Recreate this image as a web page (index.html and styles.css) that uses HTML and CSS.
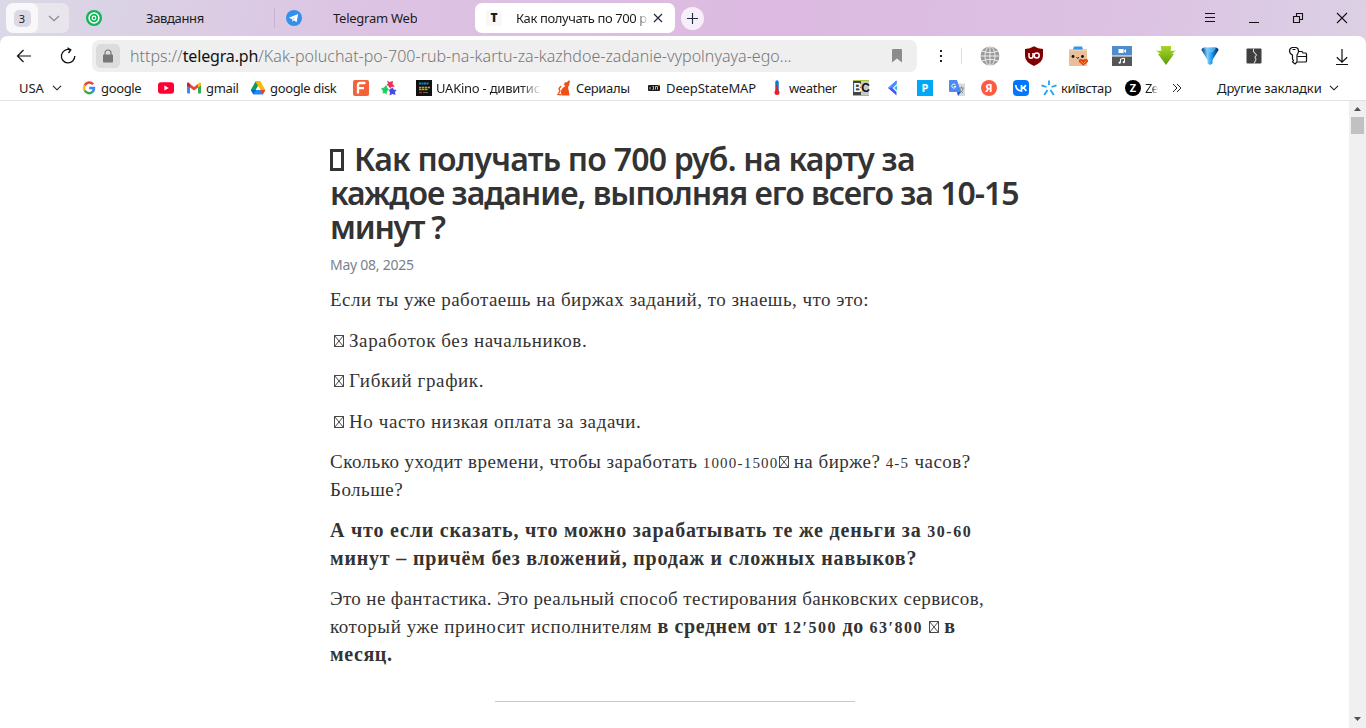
FILE: index.html
```html
<!DOCTYPE html>
<html lang="ru">
<head>
    <meta charset="utf-8">
    <title>Как получать по 700 руб.</title>
    <link rel="stylesheet" href="styles.css">
</head>
<body>
    <svg class="defs">
        <symbol id="tofu" viewBox="0 0 10 12"><path d="M.5.5h9v11h-9zM.5.5l9 11M9.5.5l-9 11" fill="none" stroke="#333" stroke-width=".9"/></symbol>
        <symbol id="down" viewBox="0 0 10 6"><path d="M1 .8l4 4 4-4" fill="none" stroke="currentColor" stroke-width="1.1"/></symbol>
    </svg>
    <div class="tabs">
        <div class="group">
            <div class="group_count"><span>3</span></div>
            <svg class="group_arrow" width="12" height="7" viewBox="0 0 12 7"><path d="M1 1l5 4.6L11 1" fill="none" stroke="#8d8791" stroke-width="1.2"/></svg>
        </div>
        <div class="tab first">
            <svg width="16" height="16" viewBox="0 0 16 16"><circle cx="8" cy="8" r="8" fill="#13b455"/><circle cx="8" cy="8" r="4.9" fill="none" stroke="#fff" stroke-width="1.5"/><circle cx="8" cy="8" r="1.8" fill="none" stroke="#fff" stroke-width="1.2"/></svg>
            <span class="t1">Завдання</span>
        </div>
        <div class="tab second">
            <svg width="16" height="16" viewBox="0 0 16 16"><circle cx="8" cy="8" r="8" fill="#3390ec"/><path d="M2.8 7.8L12.2 4l-1.6 8.2-2.7-2-1.5 1.5-.3-2.5z" fill="#fff"/><path d="M6.1 9.2l4-3.3-3 3.7-.7 2z" fill="#9fcbf6"/></svg>
            <span class="t2">Telegram Web</span>
        </div>
        <div class="tab active">
            <div class="t_icon">T</div>
            <span class="t3">Как получать по 700 р</span>
            <svg width="10" height="10" viewBox="0 0 10 10"><path d="M1 1l8 8M9 1L1 9" stroke="#222b3c" stroke-width="1.2"/></svg>
        </div>
        <div class="plus"><svg width="11" height="11" viewBox="0 0 11 11"><path d="M5.5 0v11M0 5.5h11" stroke="#222b3c" stroke-width="1.1"/></svg></div>
        <div class="window">
            <svg width="12" height="12" viewBox="0 0 12 12"><path d="M1 1.5h10M1 5.5h10M1 9.5h10" stroke="#111"/></svg>
            <svg width="12" height="12" viewBox="0 0 12 12"><path d="M1 10.5h10" stroke="#111"/></svg>
            <svg width="12" height="12" viewBox="0 0 12 12"><path d="M1.5 4.5h6v6h-6zM4.5 4.5v-3h6v6h-3" fill="none" stroke="#111" stroke-width="1.1"/></svg>
            <svg width="12" height="12" viewBox="0 0 12 12"><path d="M1 1l10 10M11 1L1 11" stroke="#111" stroke-width="1.1"/></svg>
        </div>
    </div>

    <div class="chrome">
        <div class="toolbar">
            <svg class="back" width="16" height="14" viewBox="0 0 16 14"><path d="M15 7H1.6M7.5 1l-6 6 6 6" fill="none" stroke="#111" stroke-width="1.2"/></svg>
            <svg class="reload" width="18" height="18" viewBox="0 0 18 18"><path d="M15.8 9a6.7 6.7 0 1 1-4.7-6.2M8.5.7l3.3 2.2L9.5 6" fill="none" stroke="#111" stroke-width="1.3"/></svg>
            <div class="url">
                <div class="lock"><svg width="12" height="14" viewBox="0 0 12 14"><rect x="1" y="5.5" width="10" height="8" rx="1" fill="#777"/><path d="M3 6V4a3 3 0 0 1 6 0v2" fill="none" stroke="#777" stroke-width="1.2"/></svg></div>
                <div class="address">https://<b>telegra.ph</b>/Kak-poluchat-po-700-rub-na-kartu-za-kazhdoe-zadanie-vypolnyaya-ego...</div>
                <svg width="10" height="14" viewBox="0 0 10 14"><path d="M0 1q0-1 1-1h8q1 0 1 1v12.5l-5-4-5 4z" fill="#8c8c8c"/></svg>
            </div>
            <div class="dots"><i></i><i></i><i></i></div>
            <div class="line"></div>
            <div class="extensions">
                <svg width="20" height="20" viewBox="0 0 20 20"><circle cx="10" cy="10" r="9.5" fill="#999"/><path d="M10 0v20M0 10h20M2 5q8 3.2 16 0M2 15q8-3.2 16 0" fill="none" stroke="#eee"/><ellipse cx="10" cy="10" rx="5" ry="9.5" fill="none" stroke="#eee"/></svg>
                <svg width="20" height="20" viewBox="0 0 20 20"><path d="M10 .3q4 2.5 9 2.6v7q0 6-9 10-9-4-9-10v-7q5 0 9-2.6z" fill="#800000"/><path d="M5 7v3q0 2.2 2 2.2t2-2.2V7" fill="none" stroke="#fff" stroke-width="1.5"/><circle cx="12.7" cy="9.6" r="2.5" fill="none" stroke="#fff" stroke-width="1.5"/></svg>
                <svg width="20" height="20" viewBox="0 0 20 20"><rect x="1" y="3" width="18" height="17" rx="1" fill="#e9bf99"/><path d="M1 3h18v2H1z" fill="#f1cfaf"/><path d="M5 3.5L6 .5h8l1 3z" fill="#2898f2"/><circle cx="5" cy="10.5" r="1.4" fill="#111"/><circle cx="14.5" cy="10.5" r="1.4" fill="#111"/><path d="M8.5 11.5q1.2 1.5 2.5 0" fill="none" stroke="#111"/><path d="M15.3 19.5L11 16q-1-3 2-3 1.5 0 2.3 1 1-1 2.5-1 3 0 2 3z" fill="#e8391f"/><path d="M12.5 15l3 2.5 3-3" fill="none" stroke="#fa2"/></svg>
                <svg width="20" height="20" viewBox="0 0 20 20"><path d="M0 0h20v9.5H0z" fill="#4f8ccc"/><path d="M0 10.5h20V20H0z" fill="#565656"/><path d="M6.500 3h5v4h-5zM11.500 5l2.500-2v4z" fill="#fff"/><path d="M8.500 16.500V13l4-.8V16" fill="none" stroke="#fff"/><circle cx="7.7" cy="16.7" r="1.1" fill="#fff"/><circle cx="11.8" cy="16.2" r="1.1" fill="#fff"/></svg>
                <svg width="20" height="20" viewBox="0 0 20 20"><defs><linearGradient id="green" x2="0" y2="1"><stop stop-color="#a9d52a"/><stop offset="1" stop-color="#5b9d0c"/></linearGradient></defs><path d="M2 0h3v4.500H0L3.500 8H2l8 11 8-11h-1.500L20 4.500h-5V0h3z" fill="url(#green)"/><path d="M3 0l2.500 4.500H.5L4.500 8M17 0l-2.500 4.500h5L15.500 8" fill="none" stroke="#eef8d3" stroke-width=".7"/></svg>
                <svg width="20" height="20" viewBox="0 0 20 20"><defs><linearGradient id="blue"><stop stop-color="#04337c"/><stop offset=".35" stop-color="#7cd0fb"/><stop offset=".6" stop-color="#1d9cf2"/><stop offset="1" stop-color="#02235c"/></linearGradient></defs><path d="M1.5 4q0-2 3-2.5h11q3 .5 3 2.500l-6 10v3.500L10 19l-2.500-1.500V14z" fill="url(#blue)"/><path d="M4 2h12l-3 4-3 1-3-1z" fill="#7cc9f8" opacity=".6"/></svg>
                <svg width="20" height="20" viewBox="0 0 20 20"><rect x="2.5" y="2.500" width="15" height="15" rx="1" fill="#3f3f3f"/><path d="M9.500 2.500v3l3 3.500-1.500 2 1 2.500-2 4" fill="none" stroke="#d2d2d2" stroke-width="1.1"/></svg>
                <svg width="20" height="20" viewBox="0 0 20 20"><path d="M4 1.500h4Q10.500 2 10.500 5q0 2.500-1.500 4v7l-2 2-2.500-2 1-1.500-1-1.500V9Q1.500 7.500 1.500 5T4 1.500zM4.500 3.500h3" fill="none" stroke="#111" stroke-width="1.2"/><path d="M10.500 5.500H14l1 1.500h2.500q1 0 1 1v7q0 1-1 1H9.500M9.500 10.500h9" fill="none" stroke="#111" stroke-width="1.2"/></svg>
                <svg width="20" height="20" viewBox="0 0 20 20"><path d="M10 3v13M4.800 11.200l5.200 5 5.200-5M4 18.500h12" fill="none" stroke="#111" stroke-width="1.2"/></svg>
            </div>
        </div>
        <div class="bookmarks">
            <div class="mark w62"><span class="s_usa">USA</span><svg class="usa_arrow" width="10" height="6"><use href="#down"/></svg></div>
            <div class="mark w77"><svg width="16" height="16" viewBox="0 0 16 16"><g fill="none" stroke-width="2.5"><path d="M12.1 4.3a5 5 0 0 0-8.4 1.200" stroke="#ea4335"/><path d="M3.7 5.500a5 5 0 0 0 0 5" stroke="#fbbc05"/><path d="M3.7 10.500a5 5 0 0 0 7.800 1.300" stroke="#34a853"/><path d="M11.500 11.800A5 5 0 0 0 13 8H8.200" stroke="#4285f4"/></g></svg><span class="tight">google</span></div>
            <div class="mark w28"><svg width="16" height="16" viewBox="0 0 16 16"><rect y="2.3" width="16" height="11.5" rx="3" fill="#f03"/><path d="M6.4 5.6v5L10.700 8z" fill="#fff"/></svg></div>
            <div class="mark w64"><svg width="16" height="16" viewBox="0 0 16 16"><path d="M1 4l3 2v7.500H2q-1 0-1-1z" fill="#4285f4"/><path d="M15 4l-3 2v7.500h2q1 0 1-1z" fill="#34a853"/><path d="M4 4l4 3 4-3v3.500l-4 3-4-3z" fill="#ea4335"/><path d="M1 4q0-2 2-1.200L4 4v3.500L1 5.500z" fill="#c5221f"/><path d="M15 4q0-2-2-1.200L12 4v3.500l3-2z" fill="#fbbc04"/></svg><span class="tight">gmail</span></div>
            <div class="mark w103"><svg width="16" height="16" viewBox="0 0 16 16"><path d="M5.500 1.500h5L8 6l-4.300 8L.8 10z" fill="#0f9d58"/><path d="M5.500 1.500h5l4.800 8.500h-5z" fill="#ffba00"/><path d="M5 10h10.300l-2.500 4.500H3.400z" fill="#2684fc"/><path d="M.8 10l2.600 4.500L6 10z" fill="#0066da"/><path d="M10.300 10h5l-2.500 4.500z" fill="#ea4335"/><path d="M8 6.200l2.200 3.800H5.800z" fill="#fff"/></svg><span class="tight">google disk</span></div>
            <div class="mark w28"><svg width="16" height="16" viewBox="0 0 16 16"><rect width="16" height="16" rx="2" fill="#f4623a"/><path d="M5 13.500V5q0-2 2-2h5.500M5 8.200h6" fill="none" stroke="#fff" stroke-width="2.3"/></svg></div>
            <div class="mark w35"><svg width="16" height="16" viewBox="0 0 16 16"><path d="M6 .5l2.500 1.500L12 1l-.5 3L14 6.500l-3.500.5L9 8.500 7.500 6l-2-1L7 3.500z" fill="#ed3156"/><path d="M0 8.500l3-1L5 5l1.500 3 1.500 2-2 1-.5 3.500L3.500 13l-2 .5.5-2.500z" fill="#1fce63"/><path d="M9 9l3-1.500.5 2 3 .5-1.500 2 .5 3-3-1-3 1.500.5-3-1-2z" fill="#484ae8"/></svg></div>
            <div class="mark w140"><svg width="16" height="16" viewBox="0 0 16 16"><path d="M0 0h16v16H0z" fill="#111"/><path d="M3 3.500h10" stroke="#1684cc" stroke-width="2" stroke-dasharray="2 .5"/><path d="M3 7.500h11M3 9.500h9" stroke="#bba71c" stroke-width="1.3" stroke-dasharray="2.5 .5"/><path d="M3 12.500h3" stroke="#b22" stroke-width="1.5"/><path d="M7 12.500h5" stroke="#666"/></svg><span class="s_kino">UAKino - дивитис</span></div>
            <div class="mark w90"><svg width="16" height="16" viewBox="0 0 16 16"><path d="M8.500 3l1-1 1 .5L13 .3l1 .7-1 4.500-1 1.500 1 5 .5 3.500H6q-2-3-.5-6 1-2 4-3.500L8 5z" fill="#f04e12"/><path d="M5.500 14.800L2 14.500 4 11 3 8.500l2-2.500" fill="none" stroke="#f04e12" stroke-width="1.3"/></svg><span class="tight">Сериалы</span></div>
            <div class="mark w123"><svg width="16" height="16" viewBox="0 0 16 16"><rect x="2" y="5" width="12" height="6" rx="1" fill="#1b1b1b"/><path d="M4 7v2.500M6.500 6.500h1v3h-1M9.500 9.500v-3h2v3" fill="none" stroke="#ddd" stroke-width=".8"/><path d="M12 5h2" stroke="#f9c928"/></svg><span class="s_deep">DeepStateMAP</span></div>
            <div class="mark w84"><svg width="16" height="16" viewBox="0 0 16 16"><path d="M8 2v10" stroke="#1473d4" stroke-width="3.5" stroke-linecap="round"/><path d="M8 5v7" stroke="#ed1d24" stroke-width="1.8"/><circle cx="8" cy="12.5" r="2.5" fill="#ed1d24"/></svg><span class="tight">weather</span></div>
            <div class="mark w32"><div class="square bc"><b>B</b><b>C</b></div></div>
            <div class="mark w32"><svg width="16" height="16" viewBox="0 0 16 16"><path d="M11.500.5V4l-4 4 4 4v3.500L3 8z" fill="#4757f4"/><path d="M11.500.5L3 8h4.500l4-4z" fill="#4494ff"/><path d="M12 5.500L9 8l3 2.500z" fill="#2bc1f3"/></svg></div>
            <div class="mark w32"><div class="square p">P</div></div>
            <div class="mark w32"><svg width="16" height="16" viewBox="0 0 16 16"><path d="M5 3.500h11V16H9z" fill="#d9d9d9"/><path d="M1 0h7l4 12H1q-1 0-1-1V1q0-1 1-1z" fill="#4c8bf5"/><path d="M8 12h4l-3 4z" fill="#2b59c3"/><path d="M6.500 5A2 2 0 1 0 6.800 6.500H5" fill="none" stroke="#fff"/><path d="M10 8h5M12.500 6.500V8M11 13q3-2 3-5M11 9q1 3 3 4" fill="none" stroke="#69808f" stroke-width=".8"/></svg></div>
            <div class="mark w32"><div class="square ya">Я</div></div>
            <div class="mark w28"><svg width="16" height="16" viewBox="0 0 16 16"><rect width="16" height="16" rx="4" fill="#07f"/><path d="M2.700 5q.3 5.500 5.800 6V5M8.500 8Q12 8 12.700 5M8.500 8q3.600 0 4.700 3" fill="none" stroke="#fff" stroke-width="1.7"/></svg></div>
            <div class="mark w84"><svg width="16" height="16" viewBox="0 0 16 16"><path d="M8 .5V5M10.500 7l5-1.700M9.500 10l3.300 5M6.500 10l-3.300 5M5.500 7L.5 5.300" stroke="#1ba3f5" stroke-width="1.8"/></svg><span class="tight">київстар</span></div>
            <div class="mark w44"><div class="square ze">Z</div><span class="s_ze">Ze</span></div>
            <div class="mark w48"><svg class="more" width="10" height="10" viewBox="0 0 10 10"><path d="M1 1l4 4-4 4M5 1l4 4-4 4" fill="none" stroke="#222"/></svg></div>
            <div class="mark"><span class="s_other">Другие закладки</span><svg class="other_arrow" width="10" height="6"><use href="#down"/></svg></div>
        </div>
    </div>

    <div class="page">
        <div class="article">
            <h1><span class="h1a"><i class="box"></i>Как получать по 700 руб. на карту за</span><span class="h1b">каждое задание, выполняя его всего за 10-15</span><span class="h1c">минут ?</span></h1>
            <div class="date">May 08, 2025</div>
            <p class="l1">Если ты уже работаешь на биржах заданий, то знаешь, что это:</p>
            <p class="item"><svg class="tofu"><use href="#tofu"/></svg>Заработок без начальников.</p>
            <p class="item"><svg class="tofu"><use href="#tofu"/></svg>Гибкий график.</p>
            <p class="item"><svg class="tofu"><use href="#tofu"/></svg>Но часто низкая оплата за задачи.</p>
            <p class="l2">Сколько уходит времени, чтобы заработать <span class="num">1000-1500</span><svg class="tofu"><use href="#tofu"/></svg> на бирже? <span class="num">4-5</span> часов?<br>Больше?</p>
            <p class="l3"><b>А что если сказать, что можно зарабатывать те же деньги за <span class="num">30-60</span><br>минут – причём без вложений, продаж и сложных навыков?</b></p>
            <p class="l4"><span class="l4a">Это не фантастика. Это реальный способ тестирования банковских сервисов,</span><br>который уже приносит исполнителям <b>в среднем от <span class="num">12′500</span> до <span class="num">63′800</span> <svg class="tofu"><use href="#tofu"/></svg> в<br>месяц.</b></p>
            <hr>
        </div>
        <div class="scroll">
            <svg width="7" height="4" viewBox="0 0 7 4"><path d="M0 4l3.500-4L7 4z" fill="#505050"/></svg>
            <div class="thumb"></div>
            <svg class="bottom" width="7" height="4" viewBox="0 0 7 4"><path d="M0 0l3.500 4L7 0z" fill="#505050"/></svg>
        </div>
    </div>
</body>
</html>
```
FILE: styles.css
```css
*{
    box-sizing: border-box;
}
body{
    margin: 0;
    width: 1366px;
    height: 728px;
    overflow: hidden;
    background: linear-gradient(100deg, #dad9e6 0, #dcc3e3 25%, #dcbae1 52%, #dcc2e3 76%, #dbd8e6 100%);
    font-family: "Noto Sans", "Open Sans", sans-serif;
    font-size: 13px;
    color: #1c1c1c;
}
svg{
    display: block;
    flex: none;
}
.defs{
    display: none;
}
.tabs{
    height: 36px;
    display: flex;
    align-items: center;
    padding-left: 6px;
}
.group{
    width: 63px;
    height: 30px;
    border-radius: 7px;
    background: #e8e5ed;
    display: flex;
    align-items: center;
}
.group_count{
    width: 32px;
    height: 30px;
    border-radius: 7px;
    background: #f8f7fa;
    display: flex;
    align-items: center;
    justify-content: center;
}
.group_count span{
    width: 17px;
    height: 17px;
    border-radius: 5px;
    background: #dcd9e5;
    font-size: 11px;
    line-height: 17px;
    text-align: center;
}
.group_arrow{
    margin-left: 10px;
}
.tab{
    display: flex;
    align-items: center;
    white-space: nowrap;
}
.tab span{
    overflow: hidden;
}
.first{
    width: 206px;
    height: 20px;
    padding-left: 17px;
    border-right: 1px solid #c8b3d1;
}
.t1{
    margin-left: 44px;
    letter-spacing: -.35px;
}
.second{
    width: 200px;
    padding-left: 11px;
}
.t2{
    margin-left: 31px;
    letter-spacing: -.25px;
}
.active{
    width: 200px;
    height: 30px;
    border-radius: 7px;
    background: #fff;
    padding-left: 11px;
}
.t_icon{
    width: 16px;
    height: 16px;
    background: #f8f8f8;
    font: 800 12px/16px "Open Sans", sans-serif;
    text-align: center;
}
.t3{
    width: 133px;
    margin: 0 4px 0 14px;
    letter-spacing: -.4px;
    -webkit-mask-image: linear-gradient(90deg, #000 90%, transparent);
}
.plus{
    width: 23px;
    height: 23px;
    border-radius: 50%;
    background: #f6eef8;
    margin-left: 6px;
    display: flex;
    align-items: center;
    justify-content: center;
}
.window{
    margin-left: auto;
    margin-right: 18px;
    display: flex;
    gap: 32px;
}
.chrome{
    height: 65px;
    border-radius: 8px 8px 0 0;
    border-bottom: 1px solid #e2e2e2;
    background: #fff;
}
.toolbar{
    height: 40px;
    display: flex;
    align-items: center;
    padding-left: 16px;
}
.reload{
    margin-left: 27px;
}
.url{
    width: 825px;
    height: 32px;
    margin-left: 15px;
    border-radius: 7px;
    background: #efefef;
    display: flex;
    align-items: center;
    padding: 0 15px 0 4px;
}
.lock{
    width: 24px;
    height: 24px;
    border-radius: 5px;
    background: #dcdcdc;
    display: flex;
    align-items: center;
    justify-content: center;
}
.address{
    flex: 1;
    margin-left: 10px;
    font-size: 16px;
    font-weight: 300;
    letter-spacing: .02px;
    color: #777;
    white-space: nowrap;
}
.address b{
    font-weight: 400;
    letter-spacing: -.15px;
    color: #111;
}
.dots{
    width: 2px;
    margin-left: 23px;
    display: flex;
    flex-direction: column;
    gap: 3px;
}
.dots i{
    height: 2px;
    background: #222;
}
.line{
    width: 1px;
    height: 16px;
    margin-left: 19px;
    background: #ddd;
}
.extensions{
    display: flex;
    gap: 24px;
    margin-left: 18px;
}
.bookmarks{
    height: 24px;
    display: flex;
    align-items: center;
    padding-left: 19px;
}
.mark{
    display: flex;
    align-items: center;
    flex: none;
    gap: 4px;
    white-space: nowrap;
}
.w28{ width: 28px; }
.w32{ width: 32px; }
.w35{ width: 35px; }
.w44{ width: 44px; }
.w48{ width: 48px; }
.w62{ width: 62px; }
.w64{ width: 64px; }
.w77{ width: 77px; }
.w84{ width: 84px; }
.w90{ width: 90px; }
.w103{ width: 103px; }
.w123{ width: 123px; }
.w140{ width: 140px; }
.tight{
    letter-spacing: -.35px;
}
.s_deep,.s_usa,.s_other{
    letter-spacing: -.1px;
}
.usa_arrow{
    margin-left: 4px;
}
.more{
    margin-left: 3px;
}
.other_arrow{
    margin-left: 3px;
}
.s_kino{
    width: 106px;
    overflow: hidden;
    letter-spacing: -.25px;
    -webkit-mask-image: linear-gradient(90deg, #000 80%, transparent);
}
.s_ze{
    width: 13px;
    overflow: hidden;
    letter-spacing: -.9px;
    -webkit-mask-image: linear-gradient(90deg, #000 50%, transparent);
}
.square{
    width: 16px;
    height: 16px;
    color: #fff;
    font: bold 11px/16px "Open Sans", sans-serif;
    text-align: center;
}
.bc{
    display: flex;
    border-top: 1px solid #a4c639;
    border-bottom: 1px solid #a4c639;
    background: #c9c9c9;
    color: #111;
    font: bold 12px/14px "Liberation Sans", sans-serif;
}
.bc b{
    width: 8px;
    letter-spacing: -1px;
}
.bc b:first-child{
    background: #444;
    color: #fff;
}
.p{
    background: #00a8f5;
}
.ya{
    border-radius: 50%;
    background: #fc5b41;
}
.ze{
    border-radius: 50%;
    background: #000;
}
.page{
    height: 627px;
    display: flex;
    justify-content: space-between;
    background: #fff;
}
.article{
    width: 700px;
    margin-left: 330px;
    padding-top: 41px;
    font-family: "Liberation Serif", serif;
    font-size: 19px;
    line-height: 28px;
    color: #333;
    white-space: nowrap;
}
h1{
    margin: 0;
    font: 600 32px/34px "Noto Sans", sans-serif;
}
h1 span{
    display: block;
}
.h1a{
    letter-spacing: -.77px;
}
.h1b{
    letter-spacing: -1.02px;
}
.h1c{
    letter-spacing: -1.25px;
}
.box{
    display: inline-block;
    width: 14px;
    height: 22px;
    border: 3px solid #333;
    margin-right: 10px;
}
.date{
    margin-top: 10px;
    font: 14px/22px "Noto Sans", sans-serif;
    letter-spacing: -.25px;
    color: #79828b;
}
p{
    margin: 0 0 12.5px;
}
.l1{
    margin-top: 10px;
    letter-spacing: .47px;
}
.item{
    padding-left: 4px;
    letter-spacing: .6px;
}
.l2{
    letter-spacing: .47px;
}
.l4{
    letter-spacing: .55px;
}
.l4a{
    letter-spacing: .38px;
}
.tofu{
    display: inline-block;
    width: 10px;
    height: 12px;
}
.item .tofu{
    margin-right: 5px;
}
p b{
    font-size: 20px;
    line-height: 0;
    letter-spacing: .8px;
}
.l4 b{
    letter-spacing: .6px;
}
.num{
    font-size: 15px;
    line-height: 0;
    letter-spacing: 1.2px;
}
b .num{
    font-size: 16px;
    letter-spacing: 1.5px;
}
hr{
    width: 360px;
    height: 1px;
    margin: 32px 0 0 165px;
    border: 0;
    background: #c9c9ce;
}
.scroll{
    width: 17px;
    background: #f0f0f0;
    display: flex;
    flex-direction: column;
    align-items: center;
    padding: 6px 0 7px;
}
.thumb{
    width: 13px;
    height: 17px;
    margin-top: 6px;
    background: #c1c1c1;
}
.bottom{
    margin-top: auto;
}
```
